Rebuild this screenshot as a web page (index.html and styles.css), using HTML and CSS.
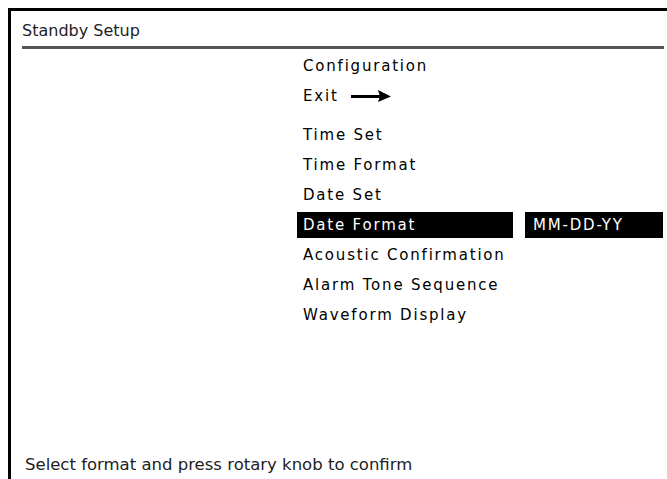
FILE: index.html
```html
<!DOCTYPE html>
<html lang="en">

<head>
    <meta charset="UTF-8">
    <meta name="viewport" content="width=device-width, initial-scale=1.0">
    <title>Standby Setup</title>
    <link rel="stylesheet" href="styles.css">
</head>

<body>
    <div class="screen">
        <header class="title-bar">
            <h1>Standby Setup</h1>
        </header>

        <ul class="menu">
            <li class="item">Configuration</li>
            <li class="item">Exit
                <svg class="arrow" width="40" height="12" viewBox="0 0 40 12">
                    <rect x="0" y="5" width="29" height="3" fill="#000"/>
                    <polygon points="27,0 40,6.5 27,12 29,6.5" fill="#000"/>
                </svg>
            </li>
            <li class="item spaced">Time Set</li>
            <li class="item">Time Format</li>
            <li class="item">Date Set</li>
            <li class="item selected">
                <span class="label">Date Format</span>
                <span class="value">MM-DD-YY</span>
            </li>
            <li class="item">Acoustic Confirmation</li>
            <li class="item">Alarm Tone Sequence</li>
            <li class="item">Waveform Display</li>
        </ul>

        <footer class="hint">Select format and press rotary knob to confirm</footer>
    </div>
</body>

</html>
```

FILE: styles.css
```css
html,
body {
    height: 100%;
}

body {
    background-color: #fff;
    margin: 0;
    padding: 8px 0 0 8px;
    box-sizing: border-box;
    overflow: hidden;
}

.screen {
    border-top: 3px solid #000;
    border-left: 3px solid #000;
    height: 100%;
    box-sizing: border-box;
    padding: 0 3px 0 11px;
    display: flex;
    flex-direction: column;
}

.title-bar {
    height: 38px;
    padding-top: 3px;
    box-sizing: border-box;
    border-bottom: 3px solid #555;
    display: flex;
    align-items: center;
}

h1 {
    margin: 0;
    font-family: "DejaVu Sans", sans-serif;
    font-size: 16px;
    font-weight: normal;
    color: #222;
}

.menu {
    list-style: none;
    margin: 2px 0 0 275px;
    padding: 0;
    font-family: "DejaVu Sans", sans-serif;
    font-size: 15px;
    letter-spacing: 1.8px;
    color: #000;
}

.item {
    height: 30px;
    padding-left: 6px;
    display: flex;
    align-items: center;
}

.item.spaced {
    margin-top: 9px;
}

.arrow {
    margin-left: 12px;
}

.item.selected {
    padding-left: 0;
    gap: 12px;
}

.selected .label,
.selected .value {
    background-color: #000;
    color: #fff;
    height: 26px;
    display: flex;
    align-items: center;
}

.selected .label {
    width: 210px;
    padding-left: 6px;
}

.selected .value {
    width: 130px;
    padding-left: 8px;
}

.hint {
    margin-top: auto;
    padding: 0 0 4px 3px;
    line-height: 20px;
    font-family: "DejaVu Sans", sans-serif;
    font-size: 16.5px;
    color: #222;
}
```
